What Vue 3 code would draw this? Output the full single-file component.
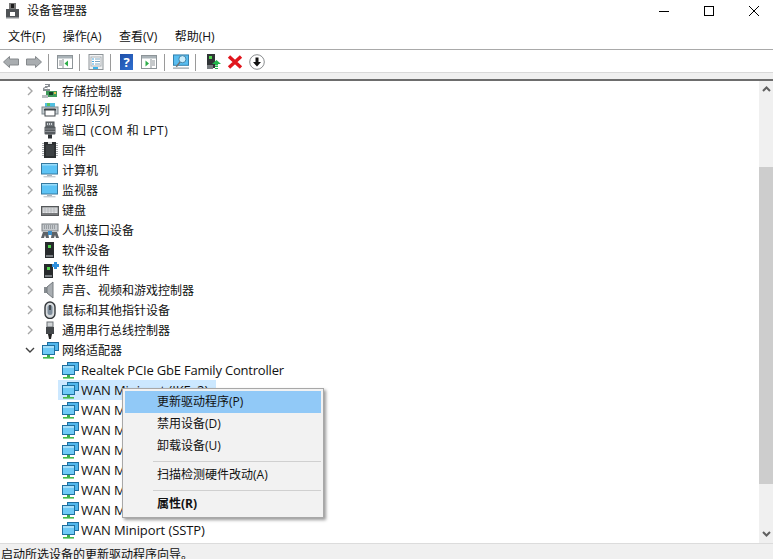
<script setup>
const net = `<rect x="6.5" y="1.5" width="11" height="8" fill="#4fb6ec" stroke="#1f6f9f"/><rect x="1.5" y="4.5" width="12" height="9" fill="#6fcaf6" stroke="#1f6f9f"/><rect x="2" y="5" width="11" height="2" fill="#a5e0fa"/><rect x="6" y="14" width="3" height="2" fill="#3fae49"/><rect x="2" y="16" width="11" height="1.6" fill="#46b94f"/>`
const mon = `<rect x="0.5" y="2.5" width="16" height="10.5" fill="#5cc3f5" stroke="#35799f"/><rect x="1" y="3" width="15" height="1.5" fill="#9adcf9"/><rect x="6" y="13.5" width="5" height="1.5" fill="#a9b4bb"/><rect x="2.5" y="15" width="12" height="1.4" fill="#c5ccd2"/>`
const icons = {
  storage: `<path d="M4 2h5v3H6.5v2H9v2H2V6l2-1z" fill="#8a8f94"/><path d="M4 3.5h3M3.5 6.5h3" stroke="#fff"/><path d="M5 9l11 0v6H5z" fill="#3f9a5a"/><rect x="8" y="10" width="4" height="3" fill="#173f28"/><rect x="13" y="10" width="2" height="2" fill="#e3c04a"/><rect x="1" y="13" width="6" height="3" fill="#b7bcc0"/>`,
  printer: `<rect x="4" y="2" width="10" height="4" fill="#4fbfe0"/><rect x="6" y="2" width="3" height="3" fill="#59c060"/><rect x="1" y="6" width="16" height="7" fill="#c5ccd0" stroke="#7f8a90" stroke-width="1"/><rect x="4" y="8" width="10" height="7" fill="#fff" stroke="#42484c"/><rect x="3" y="8" width="12" height="1.5" fill="#3c4246"/>`,
  port: `<rect x="5" y="1" width="8" height="5" fill="#6e7479" stroke="#4c5155"/><path d="M6.5 2v2M8.5 2v2M10.5 2v2" stroke="#cfd3d6"/><rect x="3.5" y="5.5" width="11" height="8" rx="1" fill="#565b5f"/><path d="M4 8h10M4 10.5h10" stroke="#8b9094"/><rect x="7" y="13.5" width="4" height="4" fill="#2e3235"/>`,
  chip: `<rect x="3" y="1" width="12" height="16" fill="#2c2f31"/><path d="M2 2v14M16 2v14" stroke="#a7abae" stroke-width="2" stroke-dasharray="1 1"/><path d="M7 1h4v2H7z" fill="#d5d7d8"/><rect x="5" y="4" width="8" height="11" fill="#3c4043"/>`,
  computer: mon,
  monitor: mon,
  keyboard: `<rect x="0.5" y="5.5" width="17" height="9" fill="#77797b" stroke="#55585a"/><rect x="1.5" y="6.5" width="15" height="5.5" fill="#e4e6e8"/><path d="M2 8h14M2 10h14" stroke="#a4a8ab" stroke-width=".6"/><path d="M4 6.5v5.5M7 6.5v5.5M10 6.5v5.5M13 6.5v5.5" stroke="#a4a8ab" stroke-width=".6"/>`,
  hid: `<rect x="1" y="3" width="16" height="7" fill="#c6cace" stroke="#7b8084"/><path d="M3 5h12M3 7h12" stroke="#6d7276" stroke-dasharray="1 1"/><path d="M2 11h5l1 6H5l-1-3-1 3H0z" fill="#5e6367"/><path d="M11 11h5l2 6h-3l-1-3-1 3h-3z" fill="#5e6367"/><rect x="7" y="10" width="4" height="4" fill="#3d8fc9"/>`,
  soft: `<rect x="4" y="1" width="9" height="16" fill="#272a2c"/><rect x="5" y="14" width="7" height="2" fill="#777c80"/><rect x="7" y="4" width="3" height="3" fill="#52d64f"/>`,
  softc: `<rect x="3" y="3" width="9" height="14" fill="#272a2c"/><rect x="4" y="14" width="7" height="2" fill="#777c80"/><rect x="6" y="6" width="3" height="3" fill="#52d64f"/><path d="M11 3h2V1h3v2h2v3h-2v2h-3V6h-2z" fill="#2e8fdd"/>`,
  sound: `<path d="M3 6h3v6H3z" fill="#868c90"/><path d="M6 6l6-5v16l-6-5z" fill="#a9aeb2" stroke="#747a7e"/>`,
  mouse: `<rect x="4" y="1" width="10" height="16.5" rx="5" fill="#d7dbde" stroke="#33373a" stroke-width="1.4"/><rect x="6.5" y="4" width="5" height="10" rx="2.5" fill="#7e8d9b"/><rect x="8" y="4" width="2" height="5" fill="#454b50"/>`,
  usb: `<rect x="6" y="1" width="6" height="5" fill="#d0d4d6" stroke="#6d7276"/><rect x="5" y="6" width="8" height="7" fill="#43474a"/><path d="M7 13h4l-1 5H8z" fill="#222"/>`,
  net
}
const top = [
  ['存储控制器', 'storage'], ['打印队列', 'printer'], ['端口 (COM 和 LPT)', 'port', true], ['固件', 'chip'],
  ['计算机', 'computer'], ['监视器', 'monitor'], ['键盘', 'keyboard'], ['人机接口设备', 'hid'],
  ['软件设备', 'soft'], ['软件组件', 'softc'], ['声音、视频和游戏控制器', 'sound'],
  ['鼠标和其他指针设备', 'mouse'], ['通用串行总线控制器', 'usb']
]
const kids = ['Realtek PCIe GbE Family Controller', 'WAN Miniport (IKEv2)', 'WAN Miniport (IP)', 'WAN Miniport (IPv6)', 'WAN Miniport (L2TP)', 'WAN Miniport (Network Monitor)', 'WAN Miniport (PPPOE)', 'WAN Miniport (PPTP)', 'WAN Miniport (SSTP)']
</script>

<template>
  <div class="win">
    <div class="title">
      <svg class="appicon" width="14" height="16" viewBox="0 0 14 16">
        <rect x="3" y="0" width="7" height="6" fill="#777"/><rect x="5" y="1" width="3" height="4" fill="#1e1e1e"/>
        <rect x="0" y="6" width="13" height="9" fill="#4f5356"/><rect x="4" y="9" width="5" height="4" fill="#fff"/>
        <rect x="0" y="14" width="13" height="1.5" fill="#8a8e91"/>
      </svg>
      <span class="t-text">设备管理器</span>
      <span class="wc">
        <svg width="10" height="10" viewBox="0 0 10 10"><path d="M0 5.5h10" stroke="#000"/></svg>
        <svg width="10" height="10" viewBox="0 0 10 10"><rect x=".5" y=".5" width="9" height="9" fill="none" stroke="#000"/></svg>
        <svg width="10" height="10" viewBox="0 0 10 10"><path d="M0 0l10 10M10 0L0 10" stroke="#000"/></svg>
      </span>
    </div>
    <div class="menubar">
      <span>文件(F)</span><span>操作(A)</span><span>查看(V)</span><span>帮助(H)</span>
    </div>
    <div class="toolbar">
      <svg class="ti" viewBox="0 0 16 12"><path d="M6.5 .5L.5 6l6 5.5V9h9V3h-9z" fill="#a9adb0" stroke="#85898c"/></svg>
      <svg class="ti fw" viewBox="0 0 16 12"><path d="M9.5 .5l6 5.5-6 5.5V9h-9V3h9z" fill="#a9adb0" stroke="#85898c"/></svg>
      <i class="sep"></i>
      <svg class="ti" viewBox="0 0 16 14"><rect x=".5" y=".5" width="15" height="13" fill="#fff" stroke="#8d9498"/><rect x="1" y="1" width="14" height="2.5" fill="#aab3b8"/><path d="M6 4v9" stroke="#8d9498"/><path d="M2 6h3M2 8h3M2 10h3" stroke="#8d9498"/><path d="M11 5.5v6L7.5 8.5z" fill="#2fae4a"/></svg>
      <i class="sep"></i>
      <svg class="ti" viewBox="0 0 16 16"><rect x="1" y=".5" width="14" height="15" fill="#f2f3f4" stroke="#8d9498"/><rect x="3" y="3" width="10" height="9" fill="#fff" stroke="#a9afb3"/><path d="M7 5h5M7 7.5h5M7 10h5" stroke="#7fa6c0"/><path d="M4 5h2M4 7.5h2M4 10h2" stroke="#45a5df"/><rect x="5" y="13" width="5" height="2" fill="#39b3ec"/></svg>
      <i class="sep"></i>
      <span class="help">?</span>
      <svg class="ti after-help" viewBox="0 0 16 14"><rect x=".5" y=".5" width="15" height="13" fill="#fff" stroke="#8d9498"/><rect x="1" y="1" width="14" height="2.5" fill="#aab3b8"/><path d="M10 4v9" stroke="#8d9498"/><path d="M11 6h3M11 8h3M11 10h3" stroke="#8d9498"/><path d="M4.5 5.5v6L8 8.5z" fill="#2fae4a"/></svg>
      <i class="sep"></i>
      <svg class="ti" viewBox="0 0 17 16"><rect x=".5" y=".5" width="16" height="11" fill="#58bdf0" stroke="#2c7daa"/><circle cx="10" cy="5" r="3.8" fill="#c9ecfb" stroke="#3b7fa4"/><path d="M7.5 8L3.5 13" stroke="#6d7478" stroke-width="1.5"/><path d="M0 14.5h17" stroke="#a3adb3" stroke-width="1.5"/></svg>
      <i class="sep"></i>
      <svg class="ti pc" viewBox="0 0 16 16"><rect x="2" y="0" width="8" height="14" fill="#303436"/><rect x="4" y="2" width="3" height="3" fill="#52d64f"/><rect x="2" y="11" width="6" height="4" fill="#777c80"/><path d="M11.5 6l4.5 4h-3v1.5h-3V10H7z" fill="#21b64b"/><path d="M10 12.5h3M10 14.5h3" stroke="#21b64b" stroke-width="1.2"/></svg>
      <svg class="ti" viewBox="0 0 16 16"><path d="M2 2.5l12 11M14 2.5L2 13.5" stroke="#e0161d" stroke-width="3.4"/></svg>
      <svg class="ti" viewBox="0 0 16 16"><circle cx="8" cy="8" r="7.3" fill="#fff" stroke="#8a8d8f"/><path d="M6.5 3.5h3V8h2.5L8 12.5 4 8h2.5z" fill="#111"/></svg>
    </div>
    <div class="band"></div>
    <div class="main">
      <div class="tree">
        <div v-for="r in top" :key="r[0]" class="row">
          <svg class="chev" width="7" height="10" viewBox="0 0 7 10"><path d="M1 1l4 4-4 4" fill="none" stroke="#a6a6a6" stroke-width="1.4"/></svg>
          <svg class="ic" width="18" height="18" viewBox="0 0 18 18" v-html="icons[r[1]]"></svg>
          <span class="lab tl" :class="{ wide: r[2] }">{{ r[0] }}</span>
        </div>
        <div class="row">
          <svg class="chev open" width="10" height="7" viewBox="0 0 10 7"><path d="M1 1l4 4 4-4" fill="none" stroke="#404040" stroke-width="1.4"/></svg>
          <svg class="ic" width="18" height="18" viewBox="0 0 18 18" v-html="icons.net"></svg>
          <span class="lab tl">网络适配器</span>
        </div>
        <div v-for="(k, i) in kids" :key="k" class="row kid">
          <div class="cell" :class="{ sel: i === 1 }">
            <svg class="ic" width="18" height="18" viewBox="0 0 18 18" v-html="icons.net"></svg>
            <span class="lab" :class="{ wan: i > 0 }">{{ k }}</span>
          </div>
        </div>
      </div>
      <div class="sb">
        <svg class="sa up" width="9" height="6" viewBox="0 0 9 6"><path d="M1 5l3.5-3.5L8 5" fill="none" stroke="#606060" stroke-width="2"/></svg>
        <div class="thumb"></div>
        <svg class="sa" width="9" height="6" viewBox="0 0 9 6"><path d="M1 1l3.5 3.5L8 1" fill="none" stroke="#606060" stroke-width="2"/></svg>
      </div>
      <div class="ctx">
        <div class="mi hi">更新驱动程序(P)</div>
        <div class="mi">禁用设备(D)</div>
        <div class="mi">卸载设备(U)</div>
        <div class="ms"></div>
        <div class="mi">扫描检测硬件改动(A)</div>
        <div class="ms"></div>
        <div class="mi b">属性(R)</div>
      </div>
    </div>
    <div class="status">启动所选设备的更新驱动程序向导。</div>
  </div>
</template>

<style>
html, body { margin: 0; background: #fff; }
</style>

<style scoped>
.win { width: 773px; height: 559px; display: flex; flex-direction: column; overflow: hidden; background: #fff; color: #111; font: 12px/16px "Open Sans", "Noto Sans CJK SC", sans-serif; }
.title { height: 24px; display: flex; align-items: center; padding: 0 14px 2px 6px; box-sizing: border-box; }
.appicon { margin-right: 7px; }
.t-text { flex: 1; }
.wc { display: flex; gap: 35px; }
.menubar { height: 25px; box-sizing: border-box; display: flex; align-items: center; gap: 17.5px; padding: 1px 0 0 8px; }
.toolbar { height: 23px; box-sizing: border-box; border-top: 1px solid #a9a9a9; display: flex; align-items: center; gap: 6px; padding: 2px 0 0 3px; }
.ti { width: 16px; height: 16px; flex: none; }
.fw { margin-left: 1px; }
.pc { margin-left: 1px; }
.sep { width: 1px; height: 17px; background: #9a9a9a; margin-right: 2px; }
.help { width: 13px; height: 16px; margin: 0 1px 0 1px; background: linear-gradient(135deg, #1f4fa8, #2f6fd0); color: #fff; font-weight: 700; font-size: 13px; line-height: 16px; text-align: center; }
.after-help { margin-left: 1px; margin-right: 1px; }
.band { height: 9px; box-sizing: border-box; background: #f0f0f0; border-top: 1px solid #d9d9d9; border-bottom: 2px solid #6d6d6d; }
.main { flex: 1; min-height: 0; display: flex; position: relative; }
.tree { flex: 1; min-width: 0; overflow: hidden; }
.row { height: 20px; display: flex; align-items: center; padding-left: 27px; white-space: nowrap; }
.row:first-child { height: 19px; }
.chev { width: 7px; margin-right: 7px; flex: none; }
.chev.open { width: 10px; margin-left: -2px; margin-right: 6px; }
.ic { flex: none; margin-right: 3px; }
.kid { padding-left: 58px; }
.cell { height: 20px; display: flex; align-items: center; padding: 0 8px 0 3px; }
.kid .ic { margin-right: 2px; }
.sel { background: #cce8ff; }
.lab { display: block; }
.tl { margin-top: 2px; }
.wide { letter-spacing: .42px; }
.kid .lab { font-size: 13px; letter-spacing: -.2px; }
.kid .wan { letter-spacing: -.1px; }
.sb { width: 14px; flex: none; background: #f0f0f0; display: flex; flex-direction: column; align-items: center; }
.sa { flex: none; margin: 0; }
.sa.up { margin-top: 5px; }
.thumb { width: 100%; height: 317px; margin: 75px 0 47px; background: #cdcdcd; }
.ctx { position: absolute; left: 122px; top: 307px; width: 196px; padding: 2px; background: #f2f2f2; border: 1px solid #a8a8a8; box-shadow: 2px 2px 3px rgba(0,0,0,.4); }
.mi { height: 22px; line-height: 22px; padding-left: 32px; }
.hi { background: #91c9f7; }
.b { font-weight: 700; }
.ms { height: 1px; background: #d0d0d0; margin: 4px 0 2px 28px; }
.status { height: 16px; flex: none; box-sizing: border-box; background: #f0f0f0; border-top: 1px solid #dcdcdc; padding-left: 1px; line-height: 22px; }
</style>
